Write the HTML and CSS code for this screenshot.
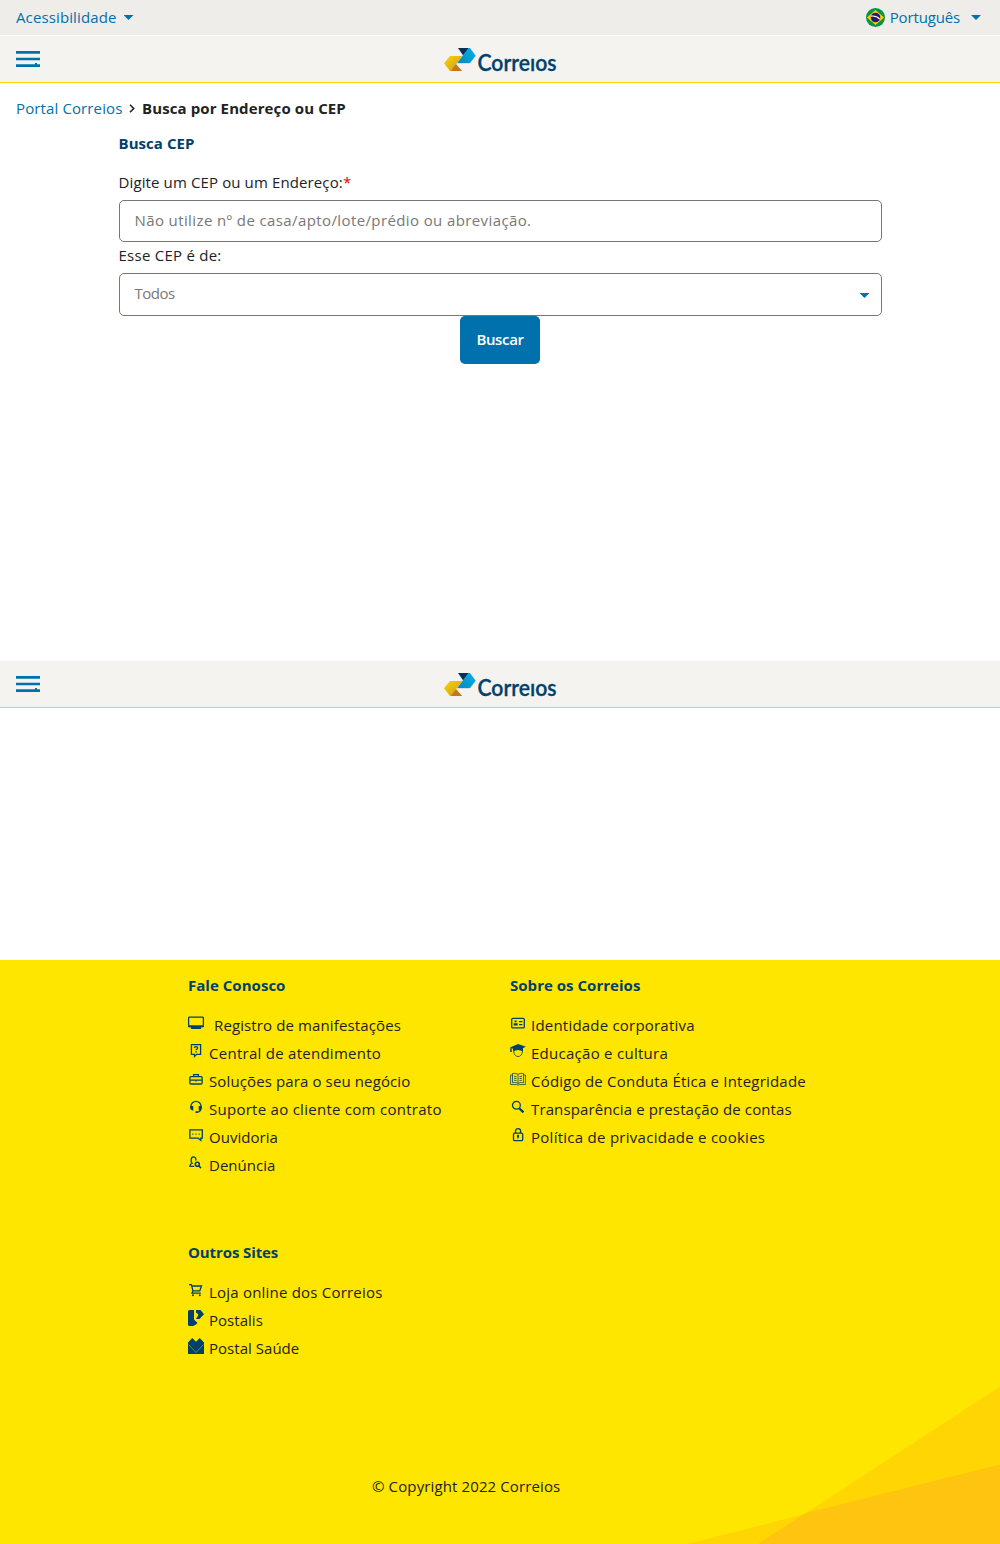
FILE: index.html
```html
<!DOCTYPE html>
<html lang="pt-BR">
<head>
<meta charset="utf-8">
<title>Busca CEP</title>
<link rel="stylesheet" href="styles.css">
</head>
<body>
<svg class="defs" width="0" height="0" aria-hidden="true">
  <defs>
    <linearGradient id="gold" x1="0" y1="0" x2="1" y2="1"><stop offset="0" stop-color="#f8d40a"/><stop offset="1" stop-color="#cf9a14"/></linearGradient>
    <linearGradient id="sky" x1="1" y1="0" x2="0" y2="1"><stop offset="0" stop-color="#00b4ea"/><stop offset="1" stop-color="#0c86bd"/></linearGradient>
    <symbol id="menu" viewBox="0 0 24 16">
      <path fill="#0071ad" d="M0 0h24v2.67H0zM0 6.67h24v2.67H0zM0 13.33h24V16H0zM19 12h2v2h-2z"/>
    </symbol>
    <symbol id="logo" viewBox="0 0 114 26">
      <path fill="#dcdcda" d="M12.800 15H26l-.8 1.100H13.400z"/>
      <path fill="url(#gold)" d="M6 8h12.300L6.800 23H6L0 15.300z"/>
      <path fill="#c3781b" d="M12 16l6.200 7H6.600z"/>
      <path fill="#0a2f57" d="M14 0h11l-5.800 7.500z"/>
      <path fill="url(#sky)" d="M24.500 0H26l5.700 7.700L26 15H13.200z"/>
      <text class="logo-text" x="33.500" y="23" textLength="79" lengthAdjust="spacingAndGlyphs">Correıos</text>
    </symbol>
  </defs>
</svg>

<div class="topbar">
  <a class="toplink t1">Acessibilidade <i class="caret"></i></a>
  <a class="toplink lang">
    <svg width="20" height="20" viewBox="0 0 20 20"><circle cx="9.500" cy="9.500" r="9.500" fill="#069447"/><path fill="#ffd000" d="M9.500 2L18 9.500 9.500 17 1 9.500z"/><circle cx="9.500" cy="9.500" r="4.800" fill="#2b1a70"/><path d="M5 8.100c3.500-.4 6.500.6 8.700 3" fill="none" stroke="#fff" stroke-width="1.200"/></svg>
    <span>Português</span> <i class="caret"></i>
  </a>
</div>
<header class="bar">
  <svg width="24" height="16"><use href="#menu"/></svg>
  <svg class="logo" width="114" height="26"><use href="#logo"/></svg>
</header>

<nav class="crumbs">
  <a class="t1">Portal Correios</a>
  <svg width="6" height="9" viewBox="0 0 6 9"><path d="M1 .8l3.700 3.700L1 8.200" fill="none" stroke="#222" stroke-width="1.600"/></svg>
  <b>Busca por Endereço ou CEP</b>
</nav>

<main class="search">
  <h1>Busca CEP</h1>
  <label class="ask t1">Digite um CEP ou um Endereço:<span class="req">*</span></label>
  <div class="field t4">Não utilize nº de casa/apto/lote/prédio ou abreviação.</div>
  <label class="kind">Esse CEP é de:</label>
  <div class="field select"><span>Todos</span><i class="caret"></i></div>
  <button class="submit">Buscar</button>
</main>

<header class="bar">
  <svg width="24" height="16"><use href="#menu"/></svg>
  <svg class="logo" width="114" height="26"><use href="#logo"/></svg>
</header>

<footer class="footer">
  <svg class="rays" width="314" height="158" viewBox="0 0 314 158">
    <path fill="#ffd504" d="M314 .5V158H72.300zM314 78.500V158H1z"/>
    <path fill="#ffc40f" d="M314 78.500V158H72.300l46.400-30.500z"/>
  </svg>
  <div class="cols">
    <section>
      <h2 class="t0">Fale Conosco</h2>
      <ul>
        <li class="wide t1"><svg viewBox="0 0 16 16"><rect x=".6" y="2.100" width="14.800" height="9.600" rx="1" class="ln"/><path d="M.5 10.300h15v2H.5zM3 12h10v2H3z"/></svg>Registro de manifestações</li>
        <li class="t3"><svg viewBox="0 0 16 16"><path class="ln" d="M3.400 1.700h9.200v9.600H8.700L6.500 13.500v-2.200H3.400z"/><path class="ln" d="M6.300 4.900c0-1.700 3.400-1.700 3.400 0 0 1.100-1.600 1.100-1.600 2.300"/><path d="M7.400 8.200h1.400v1.400H7.400z"/></svg>Central de atendimento</li>
        <li class="t1"><svg viewBox="0 0 16 16"><rect x="1.900" y="5.600" width="12.200" height="7.400" rx="1" class="ln"/><path class="ln" d="M5.600 5.600V3.700h4.800v1.900M2 9.200h12M8 8.400v2"/></svg>Soluções para o seu negócio</li>
        <li class="t3"><svg viewBox="0 0 16 16"><path class="ln" d="M3 8V7a5 4.600 0 0 1 10 0v2.200c0 2.500-1.600 3.800-4.200 3.900"/><path d="M2 7h3.300v4.500H4.200Q2 10.500 2 8.500zM14 7h-3.300v4.500h1.100Q14 10.500 14 8.500zM7.500 12.300h2.200v1.800H7.500z"/></svg>Suporte ao cliente com contrato</li>
        <li class="t0"><svg viewBox="0 0 16 16"><path class="ln" d="M1.900 2.900h12.400v8.300h-1.500v2.200l-2.600-2.200H1.900z"/><path d="M4 6.500h1.400v1.300H4zM7.300 6.500h1.400v1.300H7.300zM10.600 6.500H12v1.300h-1.400z" opacity=".75"/></svg>Ouvidoria</li>
        <li class="t0"><svg viewBox="0 0 16 16"><path class="ln" d="M6.200 11.300H1.900c0-1.800.9-2.500 2.200-2.900C2.700 6.500 2.600 2 5.500 1.900 8 1.900 8.100 4 7.700 5.600"/><circle cx="9.300" cy="9.300" r="2" class="ln bold"/><path class="ln bold" d="M10.800 10.900l2.200 2.200"/></svg>Denúncia</li>
      </ul>
    </section>
    <section class="about">
      <h2 class="t0">Sobre os Correios</h2>
      <ul>
        <li class="t2"><svg viewBox="0 0 16 16"><rect x="1.700" y="3.300" width="12.600" height="9.600" rx="1.200" class="ln"/><path d="M4.600 5.400h2v1.900h-2zM3.700 8.300h3.900v2.100H3.700zM9 5.900h3.400v1.400H9zM9 8.900h3.400v1.400H9z"/></svg>Identidade corporativa</li>
        <li class="t3"><svg viewBox="0 0 16 16"><path d="M8 1l8 2.800-3 1.200v3.600Q8 5.500 3 8.600V5.800L0 4.400zM.3 4.500h1.200L1.800 9H.2z"/><path class="ln thin" d="M3.700 8c.2 7.400 8.600 7.400 8.800 0"/></svg>Educação e cultura</li>
        <li class="t2"><svg viewBox="0 0 16 16"><path class="ln thin" d="M2.500 2.600C5 2 7 2.600 8 3.400 9 2.600 11 2 13.500 2.600v9.100C11 11.200 9 11.700 8 12.600 7 11.700 5 11.200 2.500 11.700zM8 3.400v9.200M2.500 4H.6v9.600h5.900q1.500 1 3 0h5.900V4h-1.900M4 5.200l2.500.4M4 7.200l2.500.4M4 9.200l2.500.4M12 5.200l-2.500.4M12 7.200l-2.500.4M12 9.200l-2.500.4"/></svg>Código de Conduta Ética e Integridade</li>
        <li class="t1"><svg viewBox="0 0 16 16"><circle cx="6.400" cy="6.300" r="3.900" class="ln"/><path d="M9.200 9.200l4.300 4.200" class="ln thick"/></svg>Transparência e prestação de contas</li>
        <li class="t3"><svg viewBox="0 0 16 16"><rect x="3.500" y="6.100" width="9.200" height="7.500" rx="1.200" class="ln"/><path class="ln" d="M5.500 6V4c0-3.100 5.100-3.100 5.100 0v2M8 9v2.600"/><circle cx="8" cy="9" r="1.200"/></svg>Política de privacidade e cookies</li>
      </ul>
    </section>
    <section class="sites">
      <h2 class="tm">Outros Sites</h2>
      <ul>
        <li class="t2"><svg viewBox="0 0 16 16"><path class="ln" d="M1 2.600h2.300l1.700 6.200h6.800l1.700-4.800H3.700M5 8.800l-1 2.400h8.800"/><circle cx="5" cy="13.300" r="1"/><circle cx="11.800" cy="13.300" r="1"/></svg>Loja online dos Correios</li>
        <li class="t0"><svg viewBox="0 0 16 16"><path d="M0 1.500Q0 0 1.500 0H6v9.500l3.500 3.500Q7 16 5 16H1.500Q0 16 0 14.500zM8 0h4.500L16 4.300 11.500 9H8l2.500-4.500L8 2.500z"/></svg>Postalis</li>
        <li class="t0"><svg viewBox="0 0 16 16"><path d="M0 4.500L4.300 0 8 3.700 11.700 0 16 4.500V16H0z"/><path d="M.5 6.500L8 14.500l7.500-8" fill="none" stroke="#8a942e" stroke-width=".8"/></svg>Postal Saúde</li>
      </ul>
    </section>
  </div>
  <p class="copy t1">© Copyright 2022 Correios</p>
</footer>
</body>
</html>
```
FILE: styles.css
```css
* { box-sizing: border-box; }
body {
  margin: 0;
  background: #fff;
  color: #222;
  font: 15px/20px "Open Sans", "Noto Sans", sans-serif;
  letter-spacing: .2px;
}
h1, h2, p, ul { margin: 0; padding: 0; }
ul { list-style: none; }
.defs { display: block; position: absolute; }

/* letter-spacing steps */
.tm { letter-spacing: -.1px; }
.t0 { letter-spacing: .03px; }
.t1 { letter-spacing: .12px; }
.t2 { letter-spacing: .21px; }
.t3 { letter-spacing: .27px; }
.t4 { letter-spacing: .39px; }

.caret {
  width: 10px;
  height: 5px;
  background: #0071ad;
  clip-path: polygon(0 0, 100% 0, 50% 100%);
}

.topbar {
  display: flex;
  justify-content: space-between;
  height: 36px;
  padding: 0 19px 1px 16px;
  background: #eeede9;
  border-bottom: 1px solid #fff;
}
.toplink {
  display: flex;
  align-items: center;
  gap: 7px;
  color: #0071ad;
}
.toplink .caret { margin-top: 1px; }
.toplink svg { margin-top: 2px; }
.lang { gap: 0; letter-spacing: -.15px; }
.lang span { margin: 0 11px 0 4px; }

.bar {
  display: flex;
  align-items: center;
  height: 47px;
  padding: 0 16px;
  background: #f4f3ef;
  border-bottom: 1px solid #ffd400;
}
.logo { margin: 3px 0 0 404px; }
.logo-text {
  font: 600 22px "Lato", sans-serif;
  letter-spacing: 0;
  fill: #00416b;
  stroke: #00416b;
  stroke-width: .3px;
}

.crumbs {
  display: flex;
  align-items: center;
  gap: 7px;
  padding: 15px 16px 0;
}
.crumbs a { color: #0071ad; }
.crumbs svg { margin-top: 1px; }
.crumbs b { margin-left: -.5px; letter-spacing: .11px; }

.search {
  display: flex;
  flex-direction: column;
  width: 763px;
  height: 543px;
  margin-left: 118.5px;
  padding-top: 15px;
}
h1, h2 {
  color: #00416b;
  font-size: 15px;
  line-height: 20px;
  font-weight: 700;
}
h1 { letter-spacing: .06px; }
.ask { margin: 19px 0 8px; }
.req { color: #e00000; }
.field {
  height: 42px;
  padding: 9px 11px 0 15px;
  color: #7a7774;
  border: 1px solid #80756c;
  border-radius: 5px;
}
.kind { margin: 3px 0 8px; letter-spacing: .25px; }
.select {
  display: flex;
  justify-content: space-between;
  height: 43px;
  letter-spacing: -.5px;
}
.select .caret { margin-top: 10px; }
.submit {
  width: 80px;
  height: 48px;
  margin: 0 auto;
  padding: 0 0 2px;
  color: #fff;
  font: 600 15px/20px "Open Sans", sans-serif;
  letter-spacing: -.35px;
  background: #0071ad;
  border: 0;
  border-radius: 5px;
}

.footer {
  position: relative;
  height: 584px;
  margin-top: 252px;
  padding: 15px 0 0 188px;
  background: #ffe600;
}
.rays { position: absolute; right: 0; bottom: 0; }
.cols {
  display: grid;
  grid-template-columns: 322px 1fr;
  grid-template-rows: 267px 234px;
}
.cols ul { margin-top: 16px; }
.cols li {
  display: flex;
  gap: 5px;
  height: 28px;
  line-height: 28px;
}
.cols li.wide { gap: 10px; }
.cols li svg {
  width: 16px;
  height: 16px;
  margin-top: 4px;
  fill: #00416b;
}
.cols li svg .ln { fill: none; stroke: #00416b; stroke-width: 1.300; }
.cols li svg .thin { stroke-width: .8; }
.cols li svg .bold { stroke-width: 1.600; }
.cols li svg .thick { stroke-width: 2.200; }
.copy { position: relative; padding-left: 184px; }
```
